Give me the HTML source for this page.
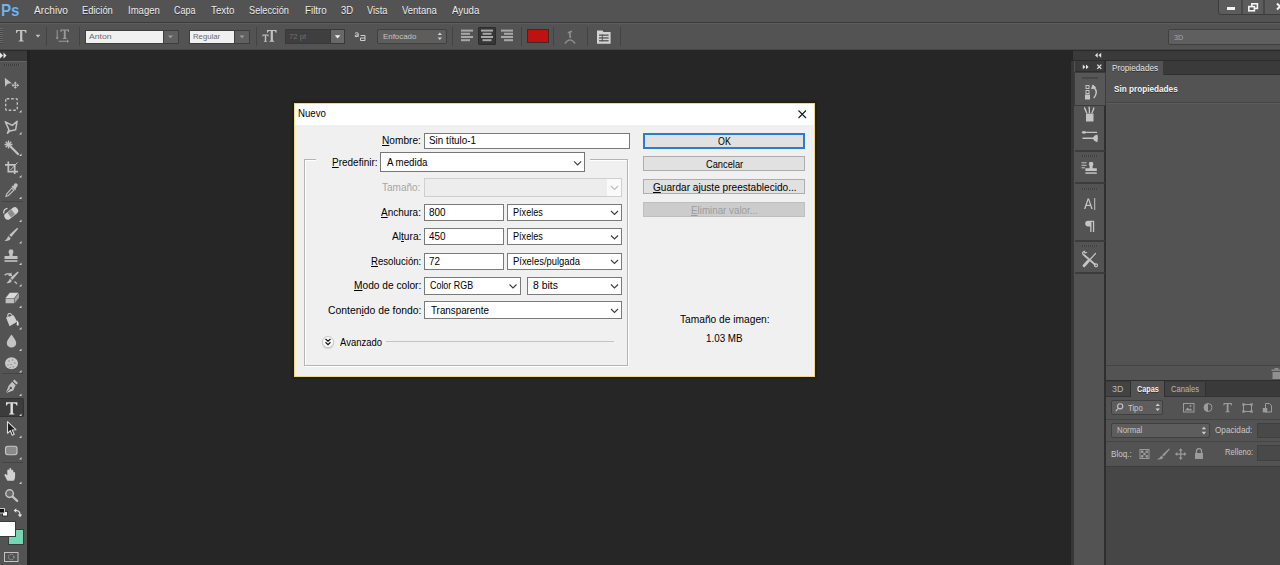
<!DOCTYPE html>
<html lang="es"><head><meta charset="utf-8"><title>Photoshop - Nuevo</title>
<style>
html,body{margin:0;padding:0}
body{width:1280px;height:565px;overflow:hidden;background:#262626;position:relative;font-family:"Liberation Sans",sans-serif;}
.a{position:absolute;box-sizing:border-box}
.t{position:absolute;white-space:nowrap;line-height:20px;height:20px;transform-origin:0 0}
.t u{text-decoration:underline;text-underline-offset:1px;text-decoration-thickness:1px}
svg{position:absolute;overflow:visible}
</style></head>
<body>
<!-- ===== application chrome ===== -->
<div class="a" id="menubar" style="left:0;top:0;width:1280px;height:23px;background:#535353;border-bottom:1px solid #3a3a3a"></div>
<div class="a" id="optbar" style="left:0;top:23px;width:1280px;height:27px;background:#535353;border-top:1px solid #5e5e5e;border-bottom:1px solid #474747"></div>
<!-- window controls -->
<div class="a" style="left:1218px;top:-2px;width:70px;height:17px;background:#5c5c5c;border:1px solid #3c3c3c;border-radius:0 0 0 3px"></div>
<div class="a" style="left:1241px;top:0;width:2px;height:14px;background:#484848"></div>
<div class="a" style="left:1263px;top:0;width:2px;height:14px;background:#484848"></div>
<div class="a" style="left:1227px;top:7px;width:8px;height:3px;background:#f4f4f4"></div>
<!-- options bar widgets -->
<div class="a" style="left:0;top:28px;width:3px;height:16px;background:repeating-linear-gradient(#6a6a6a 0 1px,#454545 1px 2px)"></div>
<div class="a" style="left:46px;top:27px;width:1px;height:19px;background:#434343"></div>
<div class="a" style="left:79px;top:27px;width:1px;height:19px;background:#434343"></div>
<div class="a" style="left:85px;top:30px;width:78px;height:14px;background:#f0f0f0;border:1px solid #3e3e3e;border-right:0"></div>
<div class="a" style="left:163px;top:30px;width:16px;height:14px;background:#606060;border:1px solid #3e3e3e"></div>
<div class="a" style="left:189px;top:30px;width:46px;height:14px;background:#f0f0f0;border:1px solid #3e3e3e;border-right:0"></div>
<div class="a" style="left:234px;top:30px;width:16px;height:14px;background:#606060;border:1px solid #3e3e3e"></div>
<div class="a" style="left:256px;top:27px;width:1px;height:19px;background:#434343"></div>
<div class="a" style="left:285px;top:29px;width:46px;height:15px;background:#3f3f3f;border:1px solid #383838;border-right:0"></div>
<div class="a" style="left:330px;top:29px;width:15px;height:15px;background:#686868;border:1px solid #383838"></div>
<div class="a" style="left:377px;top:29px;width:70px;height:15px;background:#5d5d5d;border:1px solid #3f3f3f;border-radius:2px"></div>
<div class="a" style="left:452px;top:27px;width:1px;height:19px;background:#434343"></div>
<div class="a" style="left:478px;top:27px;width:18px;height:18px;background:#363636;border:1px solid #2c2c2c;border-radius:1px"></div>
<div class="a" style="left:521px;top:27px;width:1px;height:19px;background:#434343"></div>
<div class="a" style="left:527px;top:29px;width:22px;height:14px;background:#c01111;border:1px solid #3a2a2a"></div>
<div class="a" style="left:553px;top:27px;width:1px;height:19px;background:#434343"></div>
<div class="a" style="left:587px;top:27px;width:1px;height:19px;background:#434343"></div>
<div class="a" style="left:620px;top:27px;width:1px;height:19px;background:#434343"></div>
<div class="a" style="left:1168px;top:29px;width:116px;height:16px;background:#5f5f5f;border:1px solid #404040;border-radius:2px"></div>

<!-- ===== left tools panel ===== -->
<div class="a" id="tools" style="left:0;top:50px;width:30px;height:515px;background:#535353;border-right:3px solid #222"></div>
<div class="a" style="left:0;top:50px;width:27px;height:12px;background:#3a3a3a;border-top:1px solid #2a2a2a;border-bottom:1px solid #626262"></div>
<div class="a" style="left:4px;top:64px;width:16px;height:2px;background:repeating-linear-gradient(90deg,#3c3c3c 0 1px,#5c5c5c 1px 2px)"></div>
<div class="a" style="left:2px;top:201px;width:21px;height:1px;background:#444"></div>
<div class="a" style="left:2px;top:373px;width:21px;height:1px;background:#444"></div>
<div class="a" style="left:2px;top:462px;width:21px;height:1px;background:#444"></div>
<div class="a" style="left:0;top:398px;width:24px;height:19px;background:#3c3c3c;border:1px solid #323232;border-left:0;border-radius:0 2px 2px 0"></div>
<!-- colour swatches -->
<div class="a" style="left:8px;top:529px;width:16px;height:16px;background:#72d7b2;border:1px solid #3a3a3a"></div>
<div class="a" style="left:-1px;top:521px;width:17px;height:16px;background:#fdfdfd;border:1px solid #3a3a3a"></div>

<!-- ===== right dock ===== -->
<div class="a" id="dock" style="left:1071px;top:61px;width:209px;height:504px;background:#373737"></div>
<div class="a" style="left:1073px;top:50px;width:207px;height:11px;background:#3a3a3a;border-top:1px solid #2a2a2a;border-bottom:1px solid #2c2c2c"></div>
<!-- icon column -->
<div class="a" style="left:1074px;top:61px;width:32px;height:504px;background:#535353;border-right:2px solid #2f2f2f"></div>
<div class="a" style="left:1075px;top:61px;width:29px;height:11px;background:#3b3b3b;border-bottom:1px solid #2e2e2e"></div>
<div class="a" style="left:1074px;top:72px;width:32px;height:34px;background:#575757;border:1px solid #3c3c3c"></div>
<div class="a" style="left:1075px;top:150px;width:30px;height:2px;background:#3c3c3c"></div>
<div class="a" style="left:1075px;top:182px;width:30px;height:2px;background:#3c3c3c"></div>
<div class="a" style="left:1075px;top:240px;width:30px;height:2px;background:#3c3c3c"></div>
<div class="a" style="left:1075px;top:272px;width:30px;height:2px;background:#3c3c3c"></div>
<div class="a" style="left:1082px;top:77px;width:16px;height:2px;background:#474747"></div>
<div class="a" style="left:1082px;top:155px;width:16px;height:2px;background:repeating-linear-gradient(90deg,#3e3e3e 0 1px,#5a5a5a 1px 2px)"></div>
<div class="a" style="left:1082px;top:188px;width:16px;height:2px;background:repeating-linear-gradient(90deg,#3e3e3e 0 1px,#5a5a5a 1px 2px)"></div>
<div class="a" style="left:1082px;top:245px;width:16px;height:2px;background:repeating-linear-gradient(90deg,#3e3e3e 0 1px,#5a5a5a 1px 2px)"></div>
<!-- properties panel -->
<div class="a" id="props" style="left:1106px;top:61px;width:174px;height:320px;background:#535353"></div>
<div class="a" style="left:1106px;top:61px;width:174px;height:14px;background:#3a3a3a;border-bottom:1px solid #303030"></div>
<div class="a" style="left:1106px;top:61px;width:58px;height:14px;background:#535353;border-right:1px solid #3a3a3a"></div>
<div class="a" style="left:1106px;top:102px;width:174px;height:2px;background:#464646;border-bottom:1px solid #5c5c5c"></div>
<div class="a" style="left:1106px;top:365px;width:174px;height:1px;background:#444"></div>
<div class="a" style="left:1106px;top:380px;width:174px;height:1px;background:#2e2e2e"></div>
<!-- layers panel -->
<div class="a" id="layers" style="left:1106px;top:381px;width:174px;height:184px;background:#535353"></div>
<div class="a" style="left:1106px;top:381px;width:174px;height:16px;background:#3a3a3a;border-bottom:1px solid #333"></div>
<div class="a" style="left:1106px;top:382px;width:25px;height:14px;background:#434343;border-right:1px solid #303030"></div>
<div class="a" style="left:1131px;top:381px;width:34px;height:16px;background:#535353;border-right:1px solid #303030"></div>
<div class="a" style="left:1165px;top:382px;width:41px;height:14px;background:#434343;border-right:1px solid #303030"></div>
<div class="a" style="left:1111px;top:400px;width:52px;height:15px;background:#5d5d5d;border:1px solid #404040;border-radius:2px"></div>
<div class="a" style="left:1106px;top:419px;width:174px;height:1px;background:#454545"></div>
<div class="a" style="left:1111px;top:423px;width:99px;height:15px;background:#5d5d5d;border:1px solid #404040;border-radius:2px"></div>
<div class="a" style="left:1257px;top:423px;width:30px;height:15px;background:#494949;border:1px solid #404040"></div>
<div class="a" style="left:1106px;top:441px;width:174px;height:1px;background:#454545"></div>
<div class="a" style="left:1257px;top:445px;width:30px;height:16px;background:#494949;border:1px solid #404040"></div>
<div class="a" style="left:1106px;top:466px;width:174px;height:99px;background:#464646;border-top:1px solid #3c3c3c"></div>

<!-- ===== dialog "Nuevo" ===== -->
<div class="a" id="dlg" style="left:294px;top:103px;width:521px;height:274px;background:#f0f0f0;border:1px solid #efd584;box-shadow:0 0 0 1px #2b2003,0 0 2px 1px rgba(10,8,0,.6)"></div>
<div class="a" style="left:295px;top:104px;width:519px;height:21px;background:#fff"></div>
<!-- group box -->
<div class="a" style="left:304px;top:159px;width:324px;height:207px;border:1px solid #b4b4b4;box-shadow:inset 1px 1px 0 #fff,1px 1px 0 #fff"></div>
<div class="a" style="left:316px;top:158px;width:274px;height:4px;background:#f0f0f0"></div>
<!-- fields -->
<div class="a" style="left:424px;top:133px;width:206px;height:16px;background:#fff;border:1px solid #7a7a7a"></div>
<div class="a" style="left:380px;top:152px;width:205px;height:20px;background:#fff;border:1px solid #767676"></div>
<div class="a" style="left:424px;top:178px;width:198px;height:19px;background:#ededed;border:1px solid #cfcfcf"></div>
<div class="a" style="left:607px;top:179px;width:14px;height:17px;background:#fafafa"></div>
<div class="a" style="left:424px;top:204px;width:80px;height:17px;background:#fff;border:1px solid #7a7a7a"></div>
<div class="a" style="left:507px;top:204px;width:115px;height:17px;background:#fff;border:1px solid #7a7a7a"></div>
<div class="a" style="left:424px;top:228px;width:80px;height:17px;background:#fff;border:1px solid #7a7a7a"></div>
<div class="a" style="left:507px;top:228px;width:115px;height:17px;background:#fff;border:1px solid #7a7a7a"></div>
<div class="a" style="left:424px;top:253px;width:80px;height:17px;background:#fff;border:1px solid #7a7a7a"></div>
<div class="a" style="left:507px;top:253px;width:115px;height:17px;background:#fff;border:1px solid #7a7a7a"></div>
<div class="a" style="left:424px;top:277px;width:97px;height:18px;background:#fff;border:1px solid #7a7a7a"></div>
<div class="a" style="left:527px;top:277px;width:95px;height:18px;background:#fff;border:1px solid #7a7a7a"></div>
<div class="a" style="left:424px;top:301px;width:198px;height:18px;background:#fff;border:1px solid #7a7a7a"></div>
<div class="a" style="left:386px;top:341px;width:228px;height:1px;background:#c4c4c4"></div>
<div class="a" style="left:322px;top:336px;width:12px;height:12px;border-radius:50%;background:#fbfbfb;border:1px solid #c8c8c8;box-shadow:0 1px 1px rgba(0,0,0,.15)"></div>
<!-- buttons -->
<div class="a" style="left:643px;top:133px;width:162px;height:16px;background:#e1e1e1;border:2px solid #2a7dd1"></div>
<div class="a" style="left:643px;top:156px;width:162px;height:15px;background:#e1e1e1;border:1px solid #adadad"></div>
<div class="a" style="left:643px;top:179px;width:162px;height:15px;background:#e1e1e1;border:1px solid #adadad"></div>
<div class="a" style="left:643px;top:202px;width:162px;height:15px;background:#cccccc;border:1px solid #bfbfbf"></div>
<!-- ===== icons (inline SVG) ===== -->
<svg id="ic-menubar" style="left:0;top:0" width="1280" height="50" viewBox="0 0 1280 50">
  <!-- restore / close glyphs -->
  <g fill="none" stroke="#f4f4f4" stroke-width="1.6">
    <rect x="1251.8" y="3.8" width="5.6" height="4.6"/>
    <rect x="1248.8" y="6.6" width="5.6" height="4.2" fill="#5c5c5c"/>
  </g>
  <path d="M1277 3.500l6 6m0-6l-6 6" stroke="#f4f4f4" stroke-width="2" fill="none"/>
  <!-- tool preset: T -->
  <g fill="#c2c2c2">
    <path d="M16 30h10.4v3h-.9q-.2-1.900-1.700-1.900h-1.500v8.600q0 1 1.400 1v.8h-5v-.8q1.400 0 1.400-1v-8.600h-1.500q-1.500 0-1.700 1.900h-.9z"/>
    <path d="M35.600 34.800h4.800l-2.400 2.700z"/>
  </g>
  <!-- text orientation -->
  <g fill="#9a9a9a" stroke="none">
    <path d="M60.500 29.500h8.500v2.500h-.8q-.1-1.500-1.300-1.500h-1.200v7q0 .8 1.100.8v.7h-4.100v-.7q1.100 0 1.100-.8v-7h-1.200q-1.200 0-1.300 1.500h-.8z"/>
    <path d="M56.700 30v7.500h-1.200l1.700 2 1.700-2h-1.200v-7.500z"/>
    <path d="M58.500 40.800h8.500v-1.200l2 1.700-2 1.700v-1.200h-8.500z"/>
  </g>
  <!-- dropdown arrows -->
  <path d="M168 35.500h5l-2.500 2.800z" fill="#9c9c9c"/>
  <path d="M239.500 35.500h5l-2.500 2.800z" fill="#9c9c9c"/>
  <path d="M334.800 35.300h5.600l-2.800 3.200z" fill="#f2f2f2"/>
  <!-- font size tT -->
  <g fill="#c2c2c2">
    <path d="M267 30h9.600v2.800h-.8q-.2-1.800-1.600-1.800h-1.300v9q0 .9 1.300.9v.8h-4.800v-.8q1.300 0 1.300-.9v-9h-1.300q-1.400 0-1.600 1.800h-.8z"/>
    <path d="M262.500 34.600h6v1.800h-.6q-.1-1-.9-1h-.8v5.200q0 .5.900.5v.6h-3.200v-.6q.9 0 .9-.5v-5.200h-.8q-.8 0-.9 1h-.6z"/>
  </g>
  <!-- anti-alias aa -->
  <g fill="none" stroke="#cfcfcf" stroke-width="1">
    <path d="M355 33.300q2.300-1.300 3.200 0v3.400m0-1.800q-3.400-.2-3.300 1.200q.4 1.400 3.300 0"/>
    <path d="M360.500 35.500h4.500v5h-4.500v-2.500h4.500" stroke-linejoin="miter"/>
  </g>
  <!-- Enfocado up/down -->
  <path d="M437.600 35h4.400l-2.200-2.600zM437.600 37.500h4.400l-2.200 2.600z" fill="#cfcfcf"/>
  <!-- alignment icons -->
  <g fill="#a8a8a8">
    <rect x="461" y="29.600" width="12" height="2"/><rect x="461" y="32.800" width="9" height="2"/><rect x="461" y="36" width="12" height="2"/><rect x="461" y="39.200" width="9" height="2"/>
    <rect x="481" y="29.600" width="12" height="2"/><rect x="482.500" y="32.800" width="9" height="2"/><rect x="481" y="36" width="12" height="2"/><rect x="482.500" y="39.200" width="9" height="2"/>
    <rect x="501" y="29.600" width="12" height="2"/><rect x="504" y="32.800" width="9" height="2"/><rect x="501" y="36" width="12" height="2"/><rect x="504" y="39.200" width="9" height="2"/>
  </g>
  <!-- warp text -->
  <g fill="none" stroke="#8f8f8f" stroke-width="1.200">
    <path d="M564.800 43.600q5.200-7.600 10.400 0"/>
    <path d="M567.300 33.400l1-1.600 3.400-1.400.6 1.600-1.700.700.600 5.300h-1.700l-.5-4.700z" fill="#8f8f8f" stroke="none"/>
  </g>
  <!-- character panel toggle -->
  <g>
    <path d="M597 30.600h5.500l1 1.500h7.100v11.700h-13.600z" fill="#d2d2d2"/>
    <rect x="599" y="34.500" width="9.600" height="1.300" fill="#555"/><rect x="599" y="37.300" width="9.600" height="1.300" fill="#555"/><rect x="599" y="40.100" width="9.600" height="1.300" fill="#555"/>
    <rect x="601.800" y="34.500" width="1" height="7" fill="#555"/>
  </g>
</svg>
<svg id="ic-tools" style="left:0;top:50px" width="28" height="515" viewBox="0 50 28 515">
  <!-- collapse arrows -->
  <path d="M0 52.500l3 3-3 3zM3.500 52.500l3 3-3 3z" fill="#e8e8e8"/>
  <!-- flyout corner marks -->
  <g fill="#d8d8d8">
    <path d="M21.500 110.1v2.400h-2.400z"/><path d="M21.500 132.1v2.400h-2.400z"/><path d="M21.500 153.6v2.400h-2.400z"/><path d="M21.500 175.1v2.400h-2.400z"/><path d="M21.500 196.6v2.400h-2.400z"/>
    <path d="M21.500 219.6v2.400h-2.400z"/><path d="M21.500 241.1v2.400h-2.400z"/><path d="M21.500 262.6v2.400h-2.400z"/><path d="M21.500 284.1v2.400h-2.400z"/><path d="M21.500 305.6v2.400h-2.400z"/>
    <path d="M21.500 327.1v2.400h-2.400z"/><path d="M21.500 348.6v2.400h-2.400z"/><path d="M21.500 370.1v2.400h-2.400z"/><path d="M21.500 393.6v2.400h-2.400z"/><path d="M21.500 413.6v2.400h-2.400z"/>
    <path d="M21.500 435.6v2.400h-2.400z"/><path d="M21.500 457.1v2.400h-2.400z"/><path d="M21.500 481.6v2.400h-2.400z"/>
  </g>
  <!-- move -->
  <g fill="#c2c2c2">
    <path d="M4.800 77.800l7 5.400-4 .6-2.700 2.900z"/>
    <path d="M15.300 81.600l1.700 1.900h-1.200v1.200h1.400v-1.200l1.900 1.700-1.900 1.700v-1.200h-1.400v1.200h1.200l-1.700 1.900-1.700-1.900h1.200v-1.200h-1.400v1.200l-1.900-1.700 1.900-1.700v1.200h1.400v-1.200h-1.200z"/>
  </g>
  <!-- marquee -->
  <rect x="5.700" y="98.700" width="11.600" height="11.600" fill="none" stroke="#c2c2c2" stroke-width="1.400" stroke-dasharray="2.600 1.900" rx="1"/>
  <!-- polygonal lasso -->
  <path d="M5.300 121.800l7 3.600 4.800-4.200-1.500 8.600-5.800 1.200-2.300 2.200 1.400-3.600z" fill="none" stroke="#c2c2c2" stroke-width="1.500" stroke-linejoin="round"/>
  <!-- magic wand -->
  <g stroke="#c2c2c2" fill="none">
    <path d="M8.500 140.500v8M4.500 144.500h8M5.700 141.700l5.600 5.600M11.300 141.700l-5.600 5.600" stroke-width="1.300"/>
    <path d="M10.500 146.500l7.500 7.500" stroke-width="2.200" stroke-linecap="round"/>
  </g>
  <!-- crop -->
  <g stroke="#c2c2c2" fill="none" stroke-width="1.700">
    <path d="M8.300 161.500v10.200h9.700M5 164.800h9.700v9.200"/>
    <path d="M10.500 170l7-7.500" stroke-width="1"/>
  </g>
  <!-- eyedropper -->
  <g fill="#c2c2c2">
    <path d="M14.200 183.800q1.800-1.200 3 0t0 3l-1.600 1.600.7.700-1.200 1.200-3.600-3.600 1.200-1.200.7.700z"/>
    <path d="M11.800 188.200l2 2-5.300 5.300-2.500.9.800-2.600z" fill="none" stroke="#c2c2c2" stroke-width="1.100"/>
  </g>
  <!-- healing brush -->
  <g>
    <rect x="3.500" y="210" width="15.500" height="7" rx="3.300" transform="rotate(-38 11.200 213.500)" fill="#d2d2d2"/>
    <rect x="8.700" y="210.500" width="5" height="6" transform="rotate(-38 11.200 213.500)" fill="#8d8d8d"/>
    <path d="M3.800 213.500q-.7-4.200 3.700-5.200" fill="none" stroke="#d2d2d2" stroke-width="1.200"/>
  </g>
  <!-- brush -->
  <g fill="#c2c2c2">
    <path d="M17.200 227.800l1 1-7 8.200-2-1.900z"/>
    <path d="M8.300 236l2.300 2.300q-.8 3-6.100 2.600 2.600-1.600 3.800-4.900z"/>
  </g>
  <!-- clone stamp -->
  <g fill="#c2c2c2">
    <path d="M9.400 249.400h3.200l.9 2.600-1 2.600.3 1.400h4.700v3h-13v-3h4.700l.3-1.400-1-2.600z"/>
    <rect x="4.500" y="260.200" width="13" height="1.600"/>
  </g>
  <!-- history brush -->
  <g fill="#c2c2c2">
    <path d="M17.700 271.500l1 1-6.500 7.400-1.900-1.800z"/>
    <path d="M9.700 278.700l2.100 2.100q-.8 2.600-5.300 2.300 2.200-1.400 3.200-4.400z"/>
    <path d="M4.200 274.800q2.900-3 6.200-1.200l.8-1.300 1 4-4-.3 1-1.200q-2.400-1-4 .9z"/>
    <path d="M14.500 281.500l2.500 2.300" stroke="#c2c2c2" stroke-width="1.200"/>
  </g>
  <!-- eraser -->
  <g>
    <path d="M9.800 292.800h8.600l-4.200 5.200h-8.600z" fill="#dadada"/>
    <path d="M5.600 298.600h8.600v4.600h-8.600z" fill="#bdbdbd"/>
    <path d="M14.800 298.300l4.200-5.200v4.600l-4.200 5.200z" fill="#a2a2a2"/>
  </g>
  <!-- paint bucket -->
  <g>
    <path d="M6 317.500l7.600-2.200 3.600 6.500-7.600 4.400z" fill="#d0d0d0"/>
    <path d="M8 317.200q-1-4.200 2.200-3.600 1.600.5 2.400 3" fill="none" stroke="#d0d0d0" stroke-width="1.100"/>
    <path d="M17.200 320.200q2.300 2.800 1.300 5.300-1.600.6-1.800-1.300z" fill="#eaeaea"/>
  </g>
  <!-- blur (drop) -->
  <path d="M11.500 334.600q4.700 6 4.700 8.600a4.700 4.300 0 0 1-9.400 0q0-2.600 4.700-8.600z" fill="#c4c4c4"/>
  <!-- sponge -->
  <g>
    <ellipse cx="11.500" cy="363.200" rx="6.500" ry="6" fill="#c9c9c9"/>
    <g fill="#8a8a8a"><circle cx="9" cy="361" r=".8"/><circle cx="12.500" cy="360" r=".8"/><circle cx="14.800" cy="363" r=".8"/><circle cx="11" cy="364.500" r=".8"/><circle cx="8" cy="365" r=".7"/><circle cx="13.300" cy="366.800" r=".8"/><circle cx="10.200" cy="367.500" r=".7"/></g>
  </g>
  <!-- pen -->
  <g fill="#c2c2c2">
    <path d="M14.400 379.400l3.600 3.600-1.500 1.500-3.600-3.600z"/>
    <path d="M12.200 381.800l3.400 3.400-2.400 5.200-7.400 2.800 2.800-7.500z"/>
    <circle cx="10.800" cy="388" r="1.200" fill="#535353"/>
    <path d="M6 393l4-4.200" stroke="#535353" stroke-width=".9"/>
  </g>
  <!-- type tool (selected) -->
  <path d="M6 402.200h11.400v3.300h-.9q-.3-2.100-1.900-2.100h-1.700v9.300q0 1.100 1.500 1.100v.8h-5.400v-.8q1.500 0 1.500-1.100v-9.300h-1.700q-1.600 0-1.900 2.100h-.9z" fill="#e0e0e0"/>
  <!-- path selection -->
  <path d="M7.500 421.700v11.600l2.800-2.600 2 4.500 1.900-.9-2-4.300 3.700-.3z" fill="#1c1c1c" stroke="#dcdcdc" stroke-width="1.100" stroke-linejoin="round"/>
  <!-- rounded rectangle -->
  <rect x="5.500" y="446.200" width="11.500" height="8.600" rx="2.200" fill="#8a8a8a" stroke="#c8c8c8" stroke-width="1.100"/>
  <!-- hand -->
  <path d="M7.400 480.800l-2.800-5.300q-.5-1.300.6-1.500t2.100 1.600v-5q.1-1.200 1-1.200t1 1.200v-1.600q.1-1.100 1-1.100t1 1.100v1.800q.1-1.100 1-1.100t1 1.100v2q.1-.9.900-.9t.9 1v4.100q0 2-1.400 3.800z" fill="#d2d2d2"/>
  <!-- zoom -->
  <g fill="none" stroke="#c2c2c2">
    <circle cx="9.600" cy="493.600" r="3.800" stroke-width="1.500" fill="#6a6a6a"/>
    <path d="M12.600 496.600l4.600 4.300" stroke-width="2.200" stroke-linecap="round"/>
  </g>
  <!-- default colours / swap -->
  <rect x="2.500" y="511.500" width="5" height="4.500" fill="#fafafa" stroke="#222" stroke-width=".8"/>
  <rect x="-.5" y="508.500" width="5" height="4.500" fill="#111" stroke="#e8e8e8" stroke-width=".8"/>
  <g fill="none" stroke="#e4e4e4" stroke-width="1.200">
    <path d="M16 510.500q4 0 4 4.500"/>
  </g>
  <path d="M16.300 508.300v4.400l-2.700-2.200zM17.800 514.500h4.400l-2.200 2.700z" fill="#e4e4e4"/>
  <!-- quick mask -->
  <rect x="4.500" y="552.500" width="13.500" height="9" fill="none" stroke="#c2c2c2" stroke-width="1"/>
  <circle cx="11.200" cy="557" r="2.800" fill="none" stroke="#c2c2c2" stroke-width="1" stroke-dasharray="1 1"/>
</svg>
<svg id="ic-dock" style="left:1073px;top:50px" width="207" height="515" viewBox="1073 50 207 515">
  <!-- collapse arrows -->
  <path d="M1097.700 52.800v5l-2.700-2.500zM1101.200 52.800v5l-2.700-2.500z" fill="#e6e6e6"/>
  <path d="M1082.800 64.500l2.600 2.400-2.600 2.400zM1086 64.500l2.600 2.400-2.600 2.400z" fill="#e6e6e6"/>
  <path d="M1097.300 64.700l4 4.200m0-4.200l-4 4.200" stroke="#e6e6e6" stroke-width="1.200"/>
  <!-- history -->
  <g fill="none" stroke="#c4c4c4" stroke-width="1">
    <rect x="1086" y="85.500" width="3" height="3"/><rect x="1086" y="90.500" width="3" height="3"/>
    <rect x="1085.500" y="95" width="4" height="4" fill="#c4c4c4"/>
    <path d="M1093.500 87.500q5.500 3.500.3 10.500" stroke-width="1.500"/>
    <path d="M1091.600 88.800l1.200-3.800 2.800 2.400z" fill="#c4c4c4"/>
  </g>
  <!-- brush presets -->
  <g fill="#c4c4c4">
    <rect x="1086" y="113.500" width="7.500" height="8"/>
    <path d="M1084.200 106.800q1.700 1 1.900 2.800l1.300 3.500-1.200.5-1.400-3.400q-1.300-1.400-.6-3.400zM1089 106q1.400 1.300 1 3v4h-1.300v-4q-.8-1.700.3-3zM1094 107q1 1.700 0 3.100l-1.700 3.400-1.100-.5 1.500-3.500q-.2-1.800 1.300-2.500z"/>
  </g>
  <!-- brush -->
  <g fill="#c4c4c4">
    <path d="M1081.500 132.300q2-2.300 4.600-.6h11v1.400h-11q-2.600 1.800-4.600-.8z"/>
    <path d="M1082.500 137.600h10.500q1.200-2.700 4.400-3.200 1.200 3.700 0 7.800-3.200-.5-4.400-3.200h-10.500z"/>
  </g>
  <!-- clone source -->
  <g fill="#c4c4c4">
    <path d="M1089.500 162h3.200l.7 2.200-.9 2.600.3 1.400h4v2.800h-11.400v-2.800h4l.3-1.400-.9-2.600z"/>
    <rect x="1085.400" y="172.300" width="11.400" height="1.500"/>
    <rect x="1081.500" y="162.300" width="5" height="1"/><rect x="1081.500" y="164.800" width="5" height="1"/><rect x="1081.500" y="167.300" width="3.500" height="1"/>
  </g>
  <!-- character A| -->
  <path d="M1084 209l3.600-10.600h1.500l3.600 10.600h-1.400l-1-3.100h-3.900l-1 3.100zM1086.800 204.700h3.100l-1.500-4.800z" fill="#c4c4c4"/>
  <rect x="1094.200" y="198" width="1" height="12" fill="#c4c4c4"/>
  <!-- paragraph -->
  <path d="M1088 220.800h6.200v11.200h-1.300v-10h-1.400v10h-1.300v-5.600h-2.200a2.800 2.800 0 0 1 0-5.600z" fill="#c4c4c4"/>
  <!-- tool presets -->
  <g stroke="#c4c4c4" fill="none" stroke-linecap="round">
    <path d="M1084 255l11 9.500" stroke-width="1.800"/>
    <path d="M1083 254.500q-1-2.300 1.200-3.200l.8 1.700 1.500-.5" stroke-width="1.300"/>
    <circle cx="1096" cy="265.300" r="1.500" stroke-width="1.200"/>
    <path d="M1095.500 253.500l-6 6.500" stroke-width="1.200"/>
    <path d="M1088.300 261l-4.300 4.800" stroke-width="2.800"/>
  </g>
  <!-- trash in properties footer -->
  <g fill="#909090"><rect x="1271.500" y="369.500" width="9" height="1.400"/><rect x="1274.500" y="368" width="4" height="1.500"/><path d="M1272.500 372h8v7h-8z"/></g>

  <!-- layers: search icon -->
  <g fill="none" stroke="#c4c4c4" stroke-width="1.100"><circle cx="1120.200" cy="406.300" r="2.600"/><path d="M1118.300 408.300l-2.600 2.800"/></g>
  <path d="M1155.500 406h4.400l-2.200-2.600zM1155.500 408.500h4.400l-2.200 2.600z" fill="#cfcfcf"/>
  <!-- filter icons -->
  <g fill="none" stroke="#9c9c9c" stroke-width="1">
    <rect x="1183.500" y="403.500" width="10.500" height="8.500"/>
    <path d="M1185 410.500l2.500-3 1.800 1.800 1.200-1 2 2.200z" fill="#9c9c9c" stroke="none"/><circle cx="1190.500" cy="406" r=".9" fill="#9c9c9c" stroke="none"/>
    <circle cx="1208" cy="407.500" r="4"/>
    <path d="M1208 403.500a4 4 0 0 0 0 8z" fill="#9c9c9c" stroke="none"/>
    <path d="M1243.500 404.500h8v7h-8z"/>
    <g fill="#9c9c9c" stroke="none"><rect x="1242.300" y="403.300" width="2.400" height="2.400"/><rect x="1250.300" y="403.300" width="2.400" height="2.400"/><rect x="1242.300" y="410.300" width="2.400" height="2.400"/><rect x="1250.300" y="410.300" width="2.400" height="2.400"/></g>
    <path d="M1265.500 403.500h4l2 2v6.500h-6z"/><rect x="1262.800" y="408" width="4.400" height="4.400" fill="#9c9c9c" stroke="none"/>
  </g>
  <path d="M1223.600 403h8.200v2.500h-.7q-.2-1.500-1.400-1.500h-1.200v6.800q0 .8 1.100.8v.7h-4v-.7q1.100 0 1.100-.8v-6.800h-1.200q-1.200 0-1.400 1.500h-.7z" fill="#9c9c9c"/>
  <!-- blend mode arrows -->
  <path d="M1201.700 429.300h4.400l-2.200-2.600zM1201.700 431.800h4.400l-2.200 2.600z" fill="#cfcfcf"/>
  <!-- lock icons -->
  <g fill="#9a9a9a">
    <rect x="1140" y="449.500" width="9" height="9" fill="none" stroke="#9a9a9a" stroke-width="1"/>
    <rect x="1141" y="450.500" width="2.400" height="2.400"/><rect x="1145.600" y="450.500" width="2.400" height="2.400"/><rect x="1143.300" y="452.800" width="2.400" height="2.400"/><rect x="1141" y="455.100" width="2.400" height="2.400"/><rect x="1145.600" y="455.100" width="2.400" height="2.400"/>
    <path d="M1169 448.500l.8.800-6 7.200-1.700-1.600z"/><path d="M1161.400 455.600l1.900 1.900q-.8 2.400-6.300 1.800 2.800-.8 4.400-3.700z"/>
    <path d="M1180.700 448.300l2 2.400h-1.400v2.800h2.800v-1.400l2.400 2-2.400 2v-1.400h-2.800v2.800h1.400l-2 2.400-2-2.400h1.400v-2.800h-2.800v1.400l-2.400-2 2.400-2v1.400h2.800v-2.800h-1.400z"/>
    <rect x="1195" y="453" width="8" height="6"/>
    <path d="M1196.500 453v-1.800a2.500 2.500 0 0 1 5 0v1.800" fill="none" stroke="#9a9a9a" stroke-width="1.300"/>
  </g>
</svg>
<svg id="ic-dlg" style="left:294px;top:103px" width="522" height="275" viewBox="294 103 522 275">
  <path d="M798.500 110.500l7.500 7.500m0-7.500l-7.500 7.500" stroke="#1a1a1a" stroke-width="1.100" fill="none"/>
  <g fill="none" stroke="#3c3c3c" stroke-width="1.100">
    <path d="M574 161.300l3.600 3.600 3.600-3.600"/>
    <path d="M611 211l3.500 3.500 3.500-3.500"/>
    <path d="M611 235.500l3.500 3.500 3.500-3.500"/>
    <path d="M611 260l3.500 3.500 3.500-3.500"/>
    <path d="M509.500 284.500l3.500 3.500 3.500-3.500"/>
    <path d="M611 284.500l3.500 3.500 3.500-3.500"/>
    <path d="M611 309l3.500 3.500 3.500-3.500"/>
  </g>
  <path d="M611 186l3.500 3.500 3.500-3.500" fill="none" stroke="#bdbdbd" stroke-width="1.100"/>
  <path d="M325.500 339l2.500 2.300 2.500-2.300M325.500 342.300l2.500 2.300 2.500-2.300" fill="none" stroke="#111" stroke-width="1.200"/>
</svg>

<!-- text -->
<div class="grp" id="txt-menubar">
<span class="t" style="left:34.00px;top:0.00px;font-size:10.5px;color:#ececec;text-shadow:0 1px 0 rgba(0,0,0,.45);transform:scaleX(0.967);">Archivo</span>
<span class="t" style="left:82.00px;top:0.00px;font-size:10.5px;color:#ececec;text-shadow:0 1px 0 rgba(0,0,0,.45);transform:scaleX(0.896);">Edición</span>
<span class="t" style="left:127.50px;top:0.00px;font-size:10.5px;color:#ececec;text-shadow:0 1px 0 rgba(0,0,0,.45);transform:scaleX(0.910);">Imagen</span>
<span class="t" style="left:174.00px;top:0.00px;font-size:10.5px;color:#ececec;text-shadow:0 1px 0 rgba(0,0,0,.45);transform:scaleX(0.851);">Capa</span>
<span class="t" style="left:210.50px;top:0.00px;font-size:10.5px;color:#ececec;text-shadow:0 1px 0 rgba(0,0,0,.45);transform:scaleX(0.930);">Texto</span>
<span class="t" style="left:249.00px;top:0.00px;font-size:10.5px;color:#ececec;text-shadow:0 1px 0 rgba(0,0,0,.45);transform:scaleX(0.876);">Selección</span>
<span class="t" style="left:304.50px;top:0.00px;font-size:10.5px;color:#ececec;text-shadow:0 1px 0 rgba(0,0,0,.45);transform:scaleX(0.936);">Filtro</span>
<span class="t" style="left:340.50px;top:0.00px;font-size:10.5px;color:#ececec;text-shadow:0 1px 0 rgba(0,0,0,.45);transform:scaleX(0.903);">3D</span>
<span class="t" style="left:366.50px;top:0.00px;font-size:10.5px;color:#ececec;text-shadow:0 1px 0 rgba(0,0,0,.45);transform:scaleX(0.879);">Vista</span>
<span class="t" style="left:402.00px;top:0.00px;font-size:10.5px;color:#ececec;text-shadow:0 1px 0 rgba(0,0,0,.45);transform:scaleX(0.904);">Ventana</span>
<span class="t" style="left:452.00px;top:0.00px;font-size:10.5px;color:#ececec;text-shadow:0 1px 0 rgba(0,0,0,.45);transform:scaleX(0.925);">Ayuda</span>
<span class="t" style="left:1.01px;top:1.00px;font-size:17px;color:#78b1e6;font-weight:700;text-shadow:0 0 1px #28486e;transform:scaleX(0.889);">Ps</span>
</div>
<div class="grp" id="txt-optionsbar">
<span class="t" style="left:88.70px;top:27.00px;font-size:7.8px;color:#6b6b6b;transform:scaleX(1.113);">Anton</span>
<span class="t" style="left:192.50px;top:27.00px;font-size:7.8px;color:#6b6b6b;transform:scaleX(0.992);">Regular</span>
<span class="t" style="left:289.00px;top:27.00px;font-size:7.8px;color:#707070;transform:scaleX(0.990);">72 pt</span>
<span class="t" style="left:383.00px;top:27.00px;font-size:7.8px;color:#c4c4c4;transform:scaleX(1.012);">Enfocado</span>
<span class="t" style="left:1174.00px;top:28.00px;font-size:8px;color:#a4a4a4;transform:scaleX(0.909);">3D</span>
</div>
<div class="grp" id="txt-panels">
<span class="t" style="left:1112.40px;top:58.00px;font-size:8.5px;color:#e4e4e4;text-shadow:0 1px 0 rgba(0,0,0,.45);transform:scaleX(0.967);">Propiedades</span>
<span class="t" style="left:1113.80px;top:79.00px;font-size:8.6px;color:#f4f4f4;font-weight:700;text-shadow:0 1px 0 rgba(0,0,0,.45);transform:scaleX(0.953);">Sin propiedades</span>
<span class="t" style="left:1111.80px;top:379.00px;font-size:8.5px;color:#b8b8b8;transform:scaleX(1.044);">3D</span>
<span class="t" style="left:1136.60px;top:379.00px;font-size:8.6px;color:#f4f4f4;font-weight:700;text-shadow:0 1px 0 rgba(0,0,0,.45);transform:scaleX(0.846);">Capas</span>
<span class="t" style="left:1170.50px;top:379.00px;font-size:8.5px;color:#b8b8b8;transform:scaleX(0.902);">Canales</span>
<span class="t" style="left:1128.40px;top:398.00px;font-size:8.5px;color:#c8c8c8;transform:scaleX(0.903);">Tipo</span>
<span class="t" style="left:1116.60px;top:420.00px;font-size:8.5px;color:#c8c8c8;transform:scaleX(0.923);">Normal</span>
<span class="t" style="left:1215.40px;top:420.00px;font-size:8.5px;color:#c8c8c8;transform:scaleX(0.961);">Opacidad:</span>
<span class="t" style="left:1111.40px;top:444.00px;font-size:8.5px;color:#c8c8c8;transform:scaleX(0.959);">Bloq.:</span>
<span class="t" style="left:1224.60px;top:442.00px;font-size:8.5px;color:#c8c8c8;transform:scaleX(0.899);">Relleno:</span>
</div>
<div class="grp" id="txt-dialog-nuevo">
<span class="t" style="left:298.00px;top:103.00px;font-size:10.7px;color:#000;transform:scaleX(0.905);">Nuevo</span>
<span class="t" style="left:382.00px;top:130.00px;font-size:10.7px;color:#000;transform:scaleX(0.950);"><u>N</u>ombre:</span>
<span class="t" style="left:429.00px;top:130.00px;font-size:10.7px;color:#000;transform:scaleX(0.919);">Sin título-1</span>
<span class="t" style="left:332.40px;top:152.00px;font-size:10.7px;color:#000;transform:scaleX(0.934);"><u>P</u>redefinir:</span>
<span class="t" style="left:387.00px;top:152.00px;font-size:10.7px;color:#000;transform:scaleX(0.907);">A medida</span>
<span class="t" style="left:381.60px;top:177.00px;font-size:10.7px;color:#a6a6a6;transform:scaleX(0.935);">Tamaño:</span>
<span class="t" style="left:381.00px;top:202.00px;font-size:10.7px;color:#000;transform:scaleX(0.933);"><u>A</u>nchura:</span>
<span class="t" style="left:429.00px;top:202.00px;font-size:10.7px;color:#000;transform:scaleX(0.928);">800</span>
<span class="t" style="left:513.40px;top:202.00px;font-size:10.7px;color:#000;transform:scaleX(0.853);">Píxeles</span>
<span class="t" style="left:391.60px;top:226.00px;font-size:10.7px;color:#000;transform:scaleX(0.949);">Al<u>t</u>ura:</span>
<span class="t" style="left:429.00px;top:226.00px;font-size:10.7px;color:#000;transform:scaleX(0.928);">450</span>
<span class="t" style="left:513.40px;top:226.00px;font-size:10.7px;color:#000;transform:scaleX(0.853);">Píxeles</span>
<span class="t" style="left:370.60px;top:251.00px;font-size:10.7px;color:#000;transform:scaleX(0.900);"><u>R</u>esolución:</span>
<span class="t" style="left:429.00px;top:251.00px;font-size:10.7px;color:#000;transform:scaleX(0.921);">72</span>
<span class="t" style="left:513.40px;top:251.00px;font-size:10.7px;color:#000;transform:scaleX(0.882);">Píxeles/pulgada</span>
<span class="t" style="left:353.60px;top:275.00px;font-size:10.7px;color:#000;transform:scaleX(0.952);"><u>M</u>odo de color:</span>
<span class="t" style="left:430.00px;top:275.00px;font-size:10.7px;color:#000;transform:scaleX(0.834);">Color RGB</span>
<span class="t" style="left:533.00px;top:275.00px;font-size:10.7px;color:#000;transform:scaleX(0.972);">8 bits</span>
<span class="t" style="left:327.60px;top:300.00px;font-size:10.7px;color:#000;transform:scaleX(0.970);">Conten<u>i</u>do de fondo:</span>
<span class="t" style="left:431.00px;top:300.00px;font-size:10.7px;color:#000;transform:scaleX(0.917);">Transparente</span>
<span class="t" style="left:340.00px;top:332.00px;font-size:10.7px;color:#000;transform:scaleX(0.886);">Avanzado</span>
<span class="t" style="left:717.50px;top:131.00px;font-size:10.7px;color:#000;transform:scaleX(0.828);">OK</span>
<span class="t" style="left:705.50px;top:154.00px;font-size:10.7px;color:#000;transform:scaleX(0.868);">Cancelar</span>
<span class="t" style="left:653.00px;top:177.00px;font-size:10.7px;color:#000;transform:scaleX(0.944);"><u>G</u>uardar ajuste preestablecido...</span>
<span class="t" style="left:691.00px;top:200.00px;font-size:10.7px;color:#9c9c9c;transform:scaleX(0.916);"><u>E</u>liminar valor...</span>
<span class="t" style="left:680.00px;top:309.00px;font-size:10.7px;color:#000;transform:scaleX(0.954);">Tamaño de imagen:</span>
<span class="t" style="left:705.80px;top:328.00px;font-size:10.7px;color:#000;transform:scaleX(0.920);">1.03 MB</span>
</div>
</body></html>
